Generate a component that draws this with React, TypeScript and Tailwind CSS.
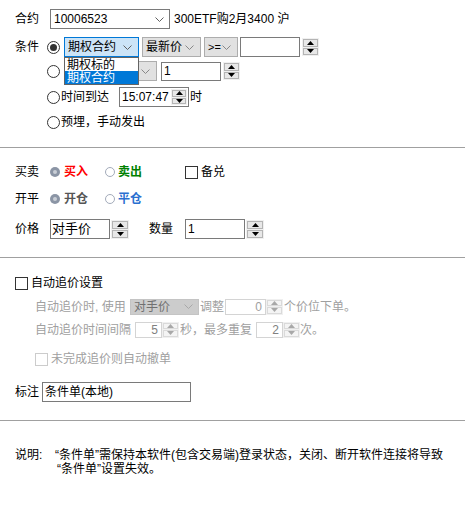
import React from "react";

function Chevron({ color = "#606060" }: { color?: string }) {
  return (
    <svg width="9" height="5" viewBox="0 0 9 5" className="shrink-0">
      <path d="M0.5 0.5 L4.5 4.5 L8.5 0.5" fill="none" stroke={color} strokeWidth="1" />
    </svg>
  );
}

function Tri({ up, color = "#000" }: { up?: boolean; color?: string }) {
  return (
    <svg width="7" height="4" viewBox="0 0 7 4">
      {up ? <path d="M0 4 L3.5 0 L7 4 Z" fill={color} /> : <path d="M0 0 L3.5 4 L7 0 Z" fill={color} />}
    </svg>
  );
}

function Spinner({ disabled, className = "" }: { disabled?: boolean; className?: string }) {
  const border = disabled ? "border-[#dadada]" : "border-[#b4b4b4]";
  const bg = disabled ? "bg-[#f4f4f4]" : "bg-[#e8e8e8]";
  const c = disabled ? "#a8a8a8" : "#000";
  return (
    <div className={`flex flex-col shrink-0 bg-[#f0f0f0] p-px gap-px ${className}`}>
      <div className={`flex-1 flex items-center justify-center border ${border} ${bg}`}>
        <Tri up color={c} />
      </div>
      <div className={`flex-1 flex items-center justify-center border ${border} ${bg}`}>
        <Tri color={c} />
      </div>
    </div>
  );
}

function BigRadio({ checked }: { checked?: boolean }) {
  return (
    <div className="w-[13px] h-[13px] rounded-full border border-[#333] bg-white flex items-center justify-center shrink-0">
      {checked && <div className="w-[7px] h-[7px] rounded-full bg-[#333]" />}
    </div>
  );
}

function SmallRadio({ checked }: { checked?: boolean }) {
  if (checked)
    return (
      <div className="w-[10px] h-[10px] rounded-full bg-[#8b95a5] flex items-center justify-center shrink-0">
        <div className="w-[4px] h-[4px] rounded-full bg-[#c9ced6]" />
      </div>
    );
  return <div className="w-[10px] h-[10px] rounded-full border border-[#a3abba] bg-white shrink-0" />;
}

function Check({ disabled }: { disabled?: boolean }) {
  return (
    <div
      className={`w-[13px] h-[13px] border shrink-0 bg-white ${disabled ? "border-[#cccccc]" : "border-[#333]"}`}
    />
  );
}

export default function App() {
  return (
    <div className="relative w-[465px] h-[511px] bg-white text-black text-[12px] leading-[12px] font-['Liberation_Sans','Noto_Sans_CJK_SC',sans-serif] overflow-hidden">
      {/* Section 1 */}
      <div className="pt-[9px]">
        {/* row 1 */}
        <div className="flex items-center h-[20px]">
          <span className="ml-[15px] w-[35px]">合约</span>
          <div className="w-[120px] h-[20px] border border-[#7a7a7a] bg-white flex items-center pl-[3px] pr-[5px]">
            <span className="flex-1">10006523</span>
            <Chevron />
          </div>
          <span className="ml-[4px]">300ETF购2月3400 沪</span>
        </div>
        {/* row 2 */}
        <div className="flex items-center h-[20px] mt-[8px]">
          <span className="ml-[15px] w-[32px]">条件</span>
          <BigRadio checked />
          <div className="ml-[4px] w-[75px] h-[20px] border border-[#0078d7] bg-[#cce4f7] flex items-center pl-[3px] pr-[6px]">
            <span className="flex-1">期权合约</span>
            <Chevron />
          </div>
          <div className="ml-[3px] w-[59px] h-[20px] border border-[#adadad] bg-[#e1e1e1] flex items-center pl-[3px] pr-[6px]">
            <span className="flex-1">最新价</span>
            <Chevron color="#888" />
          </div>
          <div className="ml-[3px] w-[34px] h-[20px] border border-[#adadad] bg-[#e1e1e1] flex items-center pl-[3px] pr-[6px]">
            <span className="flex-1 text-[11px]">&gt;=</span>
            <Chevron color="#888" />
          </div>
          <div className="ml-[2px] w-[60px] h-[20px] border border-[#7a7a7a] bg-white" />
          <Spinner className="ml-[2px] w-[17px] h-[18px]" />
        </div>
        {/* row 3 */}
        <div className="flex items-center h-[20px] mt-[4px]">
          <div className="ml-[47px]">
            <BigRadio />
          </div>
          <div className="ml-[4px] w-[93px] h-[20px] border border-[#adadad] bg-[#e1e1e1] flex items-center justify-end pr-[6px]">
            <Chevron color="#888" />
          </div>
          <div className="ml-[4px] w-[60px] h-[19px] border border-[#7a7a7a] bg-white flex items-center pl-[2px]">
            1
          </div>
          <Spinner className="ml-[2px] w-[17px] h-[18px]" />
        </div>
        {/* row 4 */}
        <div className="flex items-center h-[20px] mt-[6px]">
          <div className="ml-[47px]">
            <BigRadio />
          </div>
          <span className="ml-[1px]">时间到达</span>
          <div className="ml-[10px] w-[70px] h-[20px] border border-[#7a7a7a] bg-white flex items-center pl-[2px] pr-px">
            <span className="flex-1">15:07:47</span>
            <Spinner className="w-[16px] h-[16px]" />
          </div>
          <span className="ml-[1px]">时</span>
        </div>
        {/* row 5 */}
        <div className="flex items-center h-[20px] mt-[5px]">
          <div className="ml-[47px]">
            <BigRadio />
          </div>
          <span className="ml-[1px]">预埋，手动发出</span>
        </div>
      </div>

      <div className="mt-[15px] h-px bg-[#a0a0a0]" />

      {/* Section 2 */}
      <div>
        <div className="flex items-center h-[20px] mt-[14px]">
          <span className="ml-[15px] w-[35px]">买卖</span>
          <SmallRadio checked />
          <span className="ml-[4px] w-[41px] font-bold text-[#ff0000]">买入</span>
          <SmallRadio />
          <span className="ml-[3px] w-[67px] font-bold text-[#008000]">卖出</span>
          <Check />
          <span className="ml-[3px]">备兑</span>
        </div>
        <div className="flex items-center h-[20px] mt-[7px]">
          <span className="ml-[15px] w-[35px]">开平</span>
          <SmallRadio checked />
          <span className="ml-[4px] w-[41px] font-bold text-[#555555]">开仓</span>
          <SmallRadio />
          <span className="ml-[3px] font-bold text-[#2a6fd0]">平仓</span>
        </div>
        <div className="flex items-center h-[20px] mt-[10px]">
          <span className="ml-[15px] w-[35px]">价格</span>
          <div className="w-[60px] h-[20px] border border-[#7a7a7a] bg-white flex items-center pl-[1px] text-[13px]">
            对手价
          </div>
          <Spinner className="ml-[1px] w-[18px] h-[19px]" />
          <span className="ml-[20px] w-[36px]">数量</span>
          <div className="w-[60px] h-[20px] border border-[#7a7a7a] bg-white flex items-center pl-[2px]">
            1
          </div>
          <Spinner className="ml-[1px] w-[18px] h-[19px]" />
        </div>
      </div>

      <div className="mt-[18px] h-px bg-[#a0a0a0]" />

      {/* Section 3 */}
      <div>
        <div className="flex items-center h-[20px] mt-[15px]">
          <div className="ml-[15px]">
            <Check />
          </div>
          <span className="ml-[3px]">自动追价设置</span>
        </div>
        <div className="flex items-center h-[15px] mt-[6px] text-[#a0a0a0]">
          <span className="ml-[35px] w-[95px]">自动追价时, 使用</span>
          <div className="w-[69px] h-[16px] bg-[#cccccc] border border-[#c4c4c4] flex items-center pl-[3px] pr-[5px] text-[#707070]">
            <span className="flex-1">对手价</span>
            <Chevron color="#a8a8a8" />
          </div>
          <span className="ml-px w-[25px]">调整</span>
          <div className="w-[41px] h-[16px] border border-[#d4d4d4] bg-white flex items-center justify-end pr-[3px]">
            0
          </div>
          <Spinner disabled className="w-[17px] h-[16px]" />
          <span className="ml-px">个价位下单。</span>
        </div>
        <div className="flex items-center h-[15px] mt-[8px] text-[#a0a0a0]">
          <span className="ml-[35px] w-[100px]">自动追价时间间隔</span>
          <div className="w-[27px] h-[16px] border border-[#d4d4d4] bg-white flex items-center justify-end pr-[3px] text-[#808080]">
            5
          </div>
          <Spinner disabled className="w-[17px] h-[16px]" />
          <span className="ml-px w-[76px]">秒，最多重复</span>
          <div className="w-[27px] h-[16px] border border-[#d4d4d4] bg-white flex items-center justify-end pr-[3px] text-[#808080]">
            2
          </div>
          <Spinner disabled className="w-[17px] h-[16px]" />
          <span>次。</span>
        </div>
        <div className="flex items-center h-[20px] mt-[12px] text-[#a0a0a0]">
          <div className="ml-[35px]">
            <Check disabled />
          </div>
          <span className="ml-[3px]">未完成追价则自动撤单</span>
        </div>
        <div className="flex items-center h-[20px] mt-[13px]">
          <span className="ml-[15px] w-[27px]">标注</span>
          <div className="w-[149px] h-[20px] border border-[#7a7a7a] bg-white flex items-center pl-[2px]">
            条件单(本地)
          </div>
        </div>
      </div>

      <div className="mt-[18px] h-px bg-[#a0a0a0]" />

      {/* Note */}
      <div className="flex mt-[27px]">
        <span className="ml-[15px] w-[40px] leading-[14px]">说明:</span>
        <div className="flex flex-col leading-[14px]">
          <span>“条件单”需保持本软件(包含交易端)登录状态，关闭、断开软件连接将导致</span>
          <span className="ml-[2px]">“条件单”设置失效。</span>
        </div>
      </div>

      {/* Open dropdown list */}
      <div className="absolute left-[64px] top-[57px] w-[75px] border border-[#646464] bg-white flex flex-col text-[12px] leading-[14px]">
        <div className="h-[13px] pl-[2px] flex items-center overflow-hidden">期权标的</div>
        <div className="h-[13px] pl-[2px] flex items-center overflow-hidden bg-[#0078d7] text-white">期权合约</div>
      </div>
    </div>
  );
}
